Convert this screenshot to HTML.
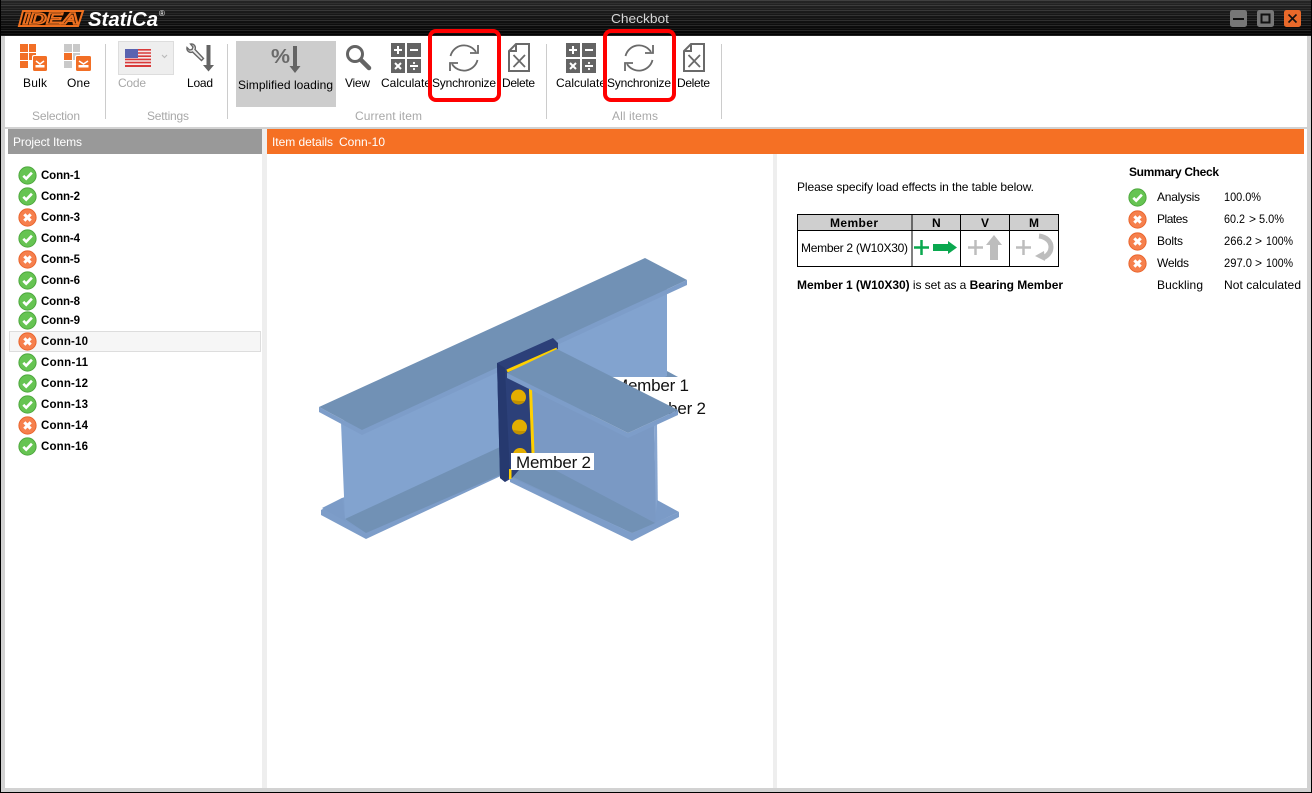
<!DOCTYPE html>
<html><head><meta charset="utf-8"><title>Checkbot</title>
<style>
html,body{margin:0;padding:0;width:1312px;height:793px;overflow:hidden;background:#d2d2d2}
#bar{position:absolute;left:0;top:0;width:1312px;height:36px;background:
repeating-linear-gradient(180deg,rgba(255,255,255,.12) 0 1px,rgba(0,0,0,0) 1px 3px,rgba(255,255,255,.06) 3px 4px,rgba(0,0,0,0) 4px 5px),
linear-gradient(180deg,#262626 0,#151515 50%,#030303 100%)}
svg{position:absolute;left:0;top:0}
text{font-family:"Liberation Sans",Arial,sans-serif;font-size:12px;fill:#000}
.b{font-weight:bold}
.l{font-weight:bold;font-size:11.500px}
.g{fill:#a8a8a8}
.w{fill:#fff}
.lab{font-size:17px;fill:#111}
</style></head><body>
<div id="bar"></div>
<svg width="1312" height="793" viewBox="0 0 1312 793" xmlns="http://www.w3.org/2000/svg">
<defs>
<g id="ok"><circle r="8.6" fill="#66c452"/><circle r="8.6" fill="none" stroke="#4ea83e" stroke-width="1"/><path d="M-4.2 .3L-1.3 3.2L4.4-2.8" fill="none" stroke="#fff" stroke-width="2.6"/></g>
<g id="no"><circle r="8.6" fill="#f6804d"/><circle r="8.6" fill="none" stroke="#e9652d" stroke-width="1"/><path d="M-3.200-3.200L3.200 3.200M3.200-3.200L-3.200 3.200" fill="none" stroke="#fff" stroke-width="3"/></g>
<g id="calc"><path fill="#646464" d="M0 0h14v14H0zM16 0h14v14H16zM0 16h14v14H0zM16 16h14v14H16z"/><path stroke="#fff" stroke-width="2" fill="none" d="M3 7h8M7 3v8M19 7h8M4 20l6 6M10 20l-6 6M19 23h8"/><circle cx="23" cy="20" r="1.100" fill="#fff"/><circle cx="23" cy="26" r="1.100" fill="#fff"/></g>
<g id="sync" fill="none" stroke="#6a6a6a" stroke-width="1.800"><path d="M-13.500-2A14 14 0 0 1 12-6"/><path d="M13.500 2A14 14 0 0 1-12 6"/><path d="M14-13V-5H6M-14 13V5H-6"/></g>
<g id="del" fill="none" stroke="#6a6a6a" stroke-width="2"><path d="M8 1H21V28H1V8Z"/><path d="M8 1V8H1"/><path d="M5.500 12L17 24M17 12L5.500 24" stroke-width="1.800"/></g>
</defs>

<!-- window chrome -->
<rect x="0" y="0" width="1" height="793" fill="#000"/>
<rect x="1311" y="0" width="1" height="793" fill="#000"/>
<rect x="0" y="792" width="1312" height="1" fill="#000"/>
<rect x="5" y="36" width="1302" height="91" fill="#fff"/>
<rect x="5" y="129" width="1302" height="659" fill="#fff"/>
<rect x="262" y="129" width="5" height="659" fill="#eee"/>
<rect x="773" y="154" width="4" height="634" fill="#eee"/>

<!-- logo -->
<g transform="translate(18,10)">
<path d="M5 1H65L60 16H1Z" fill="#140a02" stroke="#ee7020" stroke-width="2"/>
<text x="5" y="14" class="b" style="font-size:16px;font-style:italic;fill:#140a02;stroke:#ee7020;stroke-width:1.600" textLength="56" lengthAdjust="spacingAndGlyphs">IDEA</text>
</g>
<text x="88" y="26" class="b w" style="font-size:20px;font-style:italic" textLength="70" lengthAdjust="spacingAndGlyphs">StatiCa</text>
<text x="159" y="16" class="w" style="font-size:8px">®</text>
<text x="611" y="23" textLength="58" lengthAdjust="spacingAndGlyphs" style="font-size:13px;fill:#d6d6d6">Checkbot</text>

<!-- window buttons -->
<rect x="1230" y="10" width="17" height="17" rx="2.500" fill="#777"/><rect x="1233" y="18" width="11" height="2" fill="#111"/>
<rect x="1257" y="10" width="17" height="17" rx="2.500" fill="#777"/><rect x="1261.500" y="14.500" width="8" height="8" fill="none" stroke="#111" stroke-width="2"/>
<rect x="1284" y="10" width="17" height="17" rx="2.500" fill="#e8692a"/><path d="M1288.500 14.500l8 8M1296.500 14.500l-8 8" stroke="#111" stroke-width="1.600"/>

<!-- toolbar: Bulk -->
<g fill="#f26f26"><path d="M20 44h8v8h-8zM29 44h7v8h-7zM20 53h8v7h-8zM29 53h7v7h-7zM20 61h8v7h-8z"/></g>
<rect x="32" y="55" width="16" height="17" rx="2" fill="#fff"/>
<rect x="33" y="56" width="14" height="15" rx="1.500" fill="#f26f26"/>
<path d="M36 61l4 3 4-3" stroke="#fff" stroke-width="1.500" fill="none"/><rect x="35.500" y="65" width="9" height="2.500" fill="#fff"/>
<text x="23" y="87" textLength="24">Bulk</text>
<!-- One -->
<g fill="#c9c9c9"><path d="M64 44h8v8h-8zM73 44h7v8h-7zM73 53h7v7h-7zM64 61h8v7h-8z"/></g><rect x="64" y="53" width="8" height="7" fill="#f26f26"/>
<rect x="75" y="55" width="17" height="17" rx="2" fill="#fff"/>
<rect x="76" y="56" width="15" height="15" rx="1.500" fill="#f26f26"/>
<path d="M79 61l4.500 3 4.500-3" stroke="#fff" stroke-width="1.500" fill="none"/><rect x="78.500" y="65" width="10" height="2.500" fill="#fff"/>
<text x="67" y="87" textLength="23">One</text>
<rect x="105" y="44" width="1" height="75" fill="#ccc"/>
<text x="32" y="120" class="g" textLength="48">Selection</text>

<!-- Code -->
<rect x="118.500" y="41.500" width="55" height="33" fill="#eee" stroke="#ddd"/>
<rect x="125" y="49" width="26" height="18" fill="#f4e8e8"/>
<path d="M125 49h26v1.600h-26zM125 52.200h26v1.600h-26zM125 55.400h26v1.600h-26zM125 58.600h26v1.600h-26zM125 61.800h26v1.600h-26zM125 65h26v2h-26z" fill="#d83a3a"/>
<rect x="125" y="49" width="13" height="9" fill="#5a63b0"/>
<path d="M162 55l2.500 2.500 2.500-2.500" fill="none" stroke="#bbb" stroke-width="1.200"/>
<text x="118" y="87" class="g" textLength="28">Code</text>
<!-- Load -->
<g fill="none" stroke="#666" stroke-width="1.400"><path d="M187 47.500a4 4 0 0 0 5.500 4.500l9 8.500 2-2-8.500-9a4 4 0 0 0-4.500-5.500l2.500 3-1 2.500-2.500.5z" fill="#eee"/></g>
<path d="M206.500 45h4v20h3.500l-5.500 6.500-5.500-6.500h3.500z" fill="#646464"/>
<text x="187" y="87" textLength="26">Load</text>
<rect x="227" y="44" width="1" height="75" fill="#ccc"/>
<text x="147" y="120" class="g" textLength="42">Settings</text>

<!-- Simplified loading -->
<rect x="236" y="41" width="100" height="66" fill="#cdcdcd"/>
<text x="271" y="63" class="b" style="font-size:20px;fill:#6a6a6a" textLength="19" lengthAdjust="spacingAndGlyphs">%</text>
<path d="M293 46h4v20h3.500l-5.500 7-5.500-7h3.500z" fill="#646464"/>
<text x="238" y="89" textLength="95">Simplified loading</text>

<!-- View -->
<circle cx="355" cy="54" r="7.500" fill="none" stroke="#646464" stroke-width="3"/>
<path d="M361 60l8 8" stroke="#646464" stroke-width="4.500" stroke-linecap="round"/>
<text x="345" y="87" textLength="25">View</text>
<!-- current -->
<use href="#calc" x="391" y="43"/>
<text x="381" y="87" textLength="50">Calculate</text>
<use href="#sync" x="464" y="58"/>
<text x="432" y="87" textLength="64">Synchronize</text>
<use href="#del" x="508" y="43"/>
<text x="502" y="87" textLength="33">Delete</text>
<rect x="546" y="44" width="1" height="75" fill="#ccc"/>
<text x="355" y="120" class="g" textLength="67">Current item</text>
<!-- all -->
<use href="#calc" x="566" y="43"/>
<text x="556" y="87" textLength="50">Calculate</text>
<use href="#sync" x="639" y="58"/>
<text x="607" y="87" textLength="64">Synchronize</text>
<use href="#del" x="683" y="43"/>
<text x="677" y="87" textLength="33">Delete</text>
<rect x="721" y="44" width="1" height="75" fill="#ccc"/>
<text x="612" y="120" class="g" textLength="46">All items</text>
<!-- red highlights -->
<rect x="430" y="31" width="69" height="69" rx="6" fill="none" stroke="#f00" stroke-width="4"/>
<rect x="605" y="31" width="69" height="69" rx="6" fill="none" stroke="#f00" stroke-width="4"/>

<!-- headers -->
<rect x="8" y="129" width="254" height="25" fill="#999"/>
<text x="13" y="146" class="w" textLength="69">Project Items</text>
<rect x="267" y="129" width="1037" height="25" fill="#f57024"/>
<text x="272" y="146" class="w" textLength="61">Item details</text>
<text x="339" y="146" class="w" textLength="46">Conn-10</text>

<!-- list -->
<rect x="9.500" y="331.500" width="251" height="20" fill="#f6f6f6" stroke="#ddd"/>
<use href="#ok" x="27.500" y="175.500"/><text x="41" y="179" class="l" textLength="39">Conn-1</text>
<use href="#ok" x="27.500" y="196.500"/><text x="41" y="200" class="l" textLength="39">Conn-2</text>
<use href="#no" x="27.500" y="217.500"/><text x="41" y="221" class="l" textLength="39">Conn-3</text>
<use href="#ok" x="27.500" y="238.500"/><text x="41" y="242" class="l" textLength="39">Conn-4</text>
<use href="#no" x="27.500" y="259.500"/><text x="41" y="263" class="l" textLength="39">Conn-5</text>
<use href="#ok" x="27.500" y="280.500"/><text x="41" y="284" class="l" textLength="39">Conn-6</text>
<use href="#ok" x="27.500" y="301.500"/><text x="41" y="305" class="l" textLength="39">Conn-8</text>
<use href="#ok" x="27.500" y="320.500"/><text x="41" y="324" class="l" textLength="39">Conn-9</text>
<use href="#no" x="27.500" y="341.500"/><text x="41" y="345" class="l" textLength="47">Conn-10</text>
<use href="#ok" x="27.500" y="362.500"/><text x="41" y="366" class="l" textLength="47">Conn-11</text>
<use href="#ok" x="27.500" y="383.500"/><text x="41" y="387" class="l" textLength="47">Conn-12</text>
<use href="#ok" x="27.500" y="404.500"/><text x="41" y="408" class="l" textLength="47">Conn-13</text>
<use href="#no" x="27.500" y="425.500"/><text x="41" y="429" class="l" textLength="47">Conn-14</text>
<use href="#ok" x="27.500" y="446.500"/><text x="41" y="450" class="l" textLength="47">Conn-16</text>

<!-- 3D model: main beam -->
<polygon points="655,376 667,371 678,377 665,383" fill="#7191b5"/>
<polygon points="321,510 342,498 500,440 505,474 366,539 321,515" fill="#7d9dc9"/>
<polygon points="341,422 667,278 667,376 500,460 345,521" fill="#82a3cf"/>
<polygon points="345,519 500,447 500,475 366,533" fill="#7191b5"/>
<polygon points="322,508 342,498 345,519.500 366,533" fill="#7b9bc7"/>
<polygon points="319,407 362,430 687,280 687,285 362,435 319,412" fill="#7d9dc9"/>
<polygon points="319,407 362,430 687,280 645,258" fill="#7191b5"/>
<!-- hidden labels -->
<rect x="612" y="377" width="66" height="16" fill="#fff"/>
<rect x="629" y="400" width="50" height="17" fill="#fff"/>
<text x="614" y="391" class="lab" textLength="75">Member 1</text>
<text x="631" y="414" class="lab" textLength="75">Member 2</text>
<!-- secondary beam -->
<polygon points="510,372 628,436 654,424 656,500 656,523 632,533 510,478" fill="#7a99c4"/>
<polygon points="654,424 657,423 658,520 656,522" fill="#88a6d0"/>
<polygon points="510,477 632,533 679,512 679,517 632,541 510,482" fill="#7d9dc9"/>
<polygon points="513,477 632,533 655,523 555,470 520,452" fill="#7191b5"/>
<polygon points="655,523 679,512 657,500" fill="#7b9bc7"/>
<!-- plate -->
<polygon points="497,363 553,338 558,343 558,349 507,373 529,388 532,455 512,478 505,482 500,478" fill="#2c4079"/>
<polygon points="497,363 505,368 510,475 505,482 500,478" fill="#26396f"/>
<path d="M507 371L557 349" stroke="#ffd000" stroke-width="3"/>
<path d="M530.500 388L533 453" stroke="#ffd000" stroke-width="3"/>
<polygon points="507,373 628,433 678,410 678,415 628,438 507,378" fill="#7d9dc9"/>
<polygon points="507,373 557,349 678,410 628,433" fill="#7191b5"/>
<!-- bolts -->
<circle cx="518.500" cy="397" r="7.500" fill="#e3ae00"/><path d="M512 400a7.500 7.500 0 0 0 13 1l-6 0z" fill="#c09000"/>
<circle cx="519.500" cy="427" r="7.500" fill="#e3ae00"/><path d="M513 430a7.500 7.500 0 0 0 13 1l-6 0z" fill="#c09000"/>
<circle cx="520" cy="455" r="7" fill="#e3ae00"/>
<rect x="509" y="469" width="2.500" height="10" fill="#ffd000"/>
<rect x="511" y="453" width="83" height="17" fill="#fff"/>
<text x="516" y="468" class="lab" textLength="75">Member 2</text>

<!-- middle text -->
<text x="797" y="191" textLength="237">Please specify load effects in the table below.</text>
<rect x="797.500" y="214.500" width="261" height="16" fill="#cfcfcf"/>
<rect x="797.500" y="214.500" width="261" height="52" fill="none" stroke="#000"/>
<path d="M797 230.500h262M912 215v52M960.500 215v52M1009.500 215v52" stroke="#000" fill="none"/>
<text x="830" y="227" class="b" textLength="48">Member</text>
<text x="932" y="227" class="b" textLength="9">N</text>
<text x="981" y="227" class="b" textLength="9">V</text>
<text x="1029" y="227" class="b" textLength="10">M</text>
<text x="801" y="252" textLength="107">Member 2 (W10X30)</text>
<path d="M914 247.500h15M921.500 240v15" stroke="#0aa84f" stroke-width="2.500"/>
<path d="M933 244h15v-3l9 6.500-9 6.500v-3h-15z" fill="#0aa84f"/>
<path d="M968 247.500h15M975.500 240v15" stroke="#bdbdbd" stroke-width="2.500"/>
<path d="M990 260v-15h-4l8-10 8 10h-4v15z" fill="#bdbdbd"/>
<path d="M1016 247.500h15M1023.500 240v15" stroke="#bdbdbd" stroke-width="2.500"/>
<path d="M1039 236c8 1 12 6 12 11 0 6-4 9-8 11" fill="none" stroke="#bdbdbd" stroke-width="5"/>
<path d="M1035 256l9-5 1 10z" fill="#bdbdbd"/>
<text x="797" y="289" textLength="266"><tspan class="b">Member 1 (W10X30)</tspan> is set as a <tspan class="b">Bearing Member</tspan></text>

<!-- summary -->
<text x="1129" y="176" class="b" textLength="90">Summary Check</text>
<use href="#ok" x="1137.500" y="197.500"/>
<use href="#no" x="1137.500" y="219.500"/>
<use href="#no" x="1137.500" y="241.500"/>
<use href="#no" x="1137.500" y="263.500"/>
<text x="1157" y="201" textLength="43">Analysis</text><text x="1224" y="201" textLength="37" lengthAdjust="spacingAndGlyphs">100.0%</text>
<text x="1157" y="223" textLength="31">Plates</text><text x="1224" y="223" textLength="21" lengthAdjust="spacingAndGlyphs">60.2</text><text x="1249" y="223">&gt;</text><text x="1259" y="223" textLength="25" lengthAdjust="spacingAndGlyphs">5.0%</text>
<text x="1157" y="245" textLength="26">Bolts</text><text x="1224" y="245" textLength="28" lengthAdjust="spacingAndGlyphs">266.2</text><text x="1255" y="245">&gt;</text><text x="1266" y="245" textLength="27" lengthAdjust="spacingAndGlyphs">100%</text>
<text x="1157" y="267" textLength="32">Welds</text><text x="1224" y="267" textLength="28" lengthAdjust="spacingAndGlyphs">297.0</text><text x="1255" y="267">&gt;</text><text x="1266" y="267" textLength="27" lengthAdjust="spacingAndGlyphs">100%</text>
<text x="1157" y="289" textLength="46">Buckling</text><text x="1224" y="289" textLength="77">Not calculated</text>
</svg>
</body></html>
